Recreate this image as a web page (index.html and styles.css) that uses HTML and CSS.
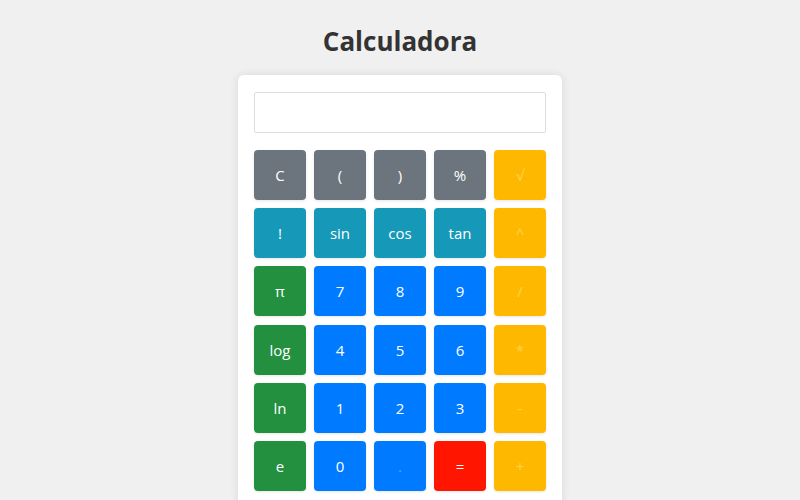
FILE: index.html
```html
<!DOCTYPE html>
<html lang="es">
<head>
<meta charset="utf-8">
<title>Calculadora</title>
<link rel="stylesheet" href="styles.css">
</head>
<body>
<h1 class="title">Calculadora</h1>
<div class="calc">
  <input class="display" type="text" readonly>
  <div class="keys">
    <button class="key gray">C</button>
    <button class="key gray">(</button>
    <button class="key gray">)</button>
    <button class="key gray">%</button>
    <button class="key yellow">√</button>
    <button class="key teal">!</button>
    <button class="key teal">sin</button>
    <button class="key teal">cos</button>
    <button class="key teal">tan</button>
    <button class="key yellow">^</button>
    <button class="key green">π</button>
    <button class="key blue">7</button>
    <button class="key blue">8</button>
    <button class="key blue">9</button>
    <button class="key yellow">/</button>
    <button class="key green">log</button>
    <button class="key blue">4</button>
    <button class="key blue">5</button>
    <button class="key blue">6</button>
    <button class="key yellow">*</button>
    <button class="key green">ln</button>
    <button class="key blue">1</button>
    <button class="key blue">2</button>
    <button class="key blue">3</button>
    <button class="key yellow">-</button>
    <button class="key green">e</button>
    <button class="key blue">0</button>
    <button class="key blue dot">.</button>
    <button class="key red">=</button>
    <button class="key yellow">+</button>
  </div>
</div>
</body>
</html>
```

FILE: styles.css
```css
html, body {
  margin: 0;
  padding: 0;
}
body {
  background: #f0f0f0;
  font-family: "Open Sans", "Liberation Sans", sans-serif;
  display: flex;
  flex-direction: column;
  align-items: center;
  height: 500px;
  overflow: hidden;
}
.title {
  margin: 24px 0 17px;
  font-size: 26px;
  line-height: 34px;
  font-weight: 700;
  color: #333;
}
.calc {
  width: 292px;
  background: #fff;
  padding: 17px 16px 16px;
  border-radius: 6px;
  box-shadow: 0 0 10px rgba(0, 0, 0, 0.1);
}
.display {
  display: block;
  box-sizing: border-box;
  width: 100%;
  height: 41px;
  margin: 0 0 17px;
  border: 1px solid #ddd;
  border-radius: 2px;
  background: #fff;
  padding: 0 8px;
  font-family: inherit;
  font-size: 20px;
  text-align: right;
  outline: none;
}
.keys {
  display: grid;
  grid-template-columns: repeat(5, 52px);
  grid-auto-rows: 50px;
  column-gap: 8px;
  row-gap: 8.2px;
}
.key {
  border: none;
  border-radius: 4px;
  color: #fff;
  font-family: inherit;
  font-size: 15px;
  padding: 0;
  box-shadow: 0 1px 3px rgba(0, 0, 0, 0.1);
}
.gray { background: #6c757d; }
.teal { background: #1699b8; }
.green { background: #22903f; }
.blue { background: #007bff; }
.red { background: #ff1500; }
.yellow { background: #ffb800; color: #ffd24d; }
.dot { color: #4da3ff; }
```
